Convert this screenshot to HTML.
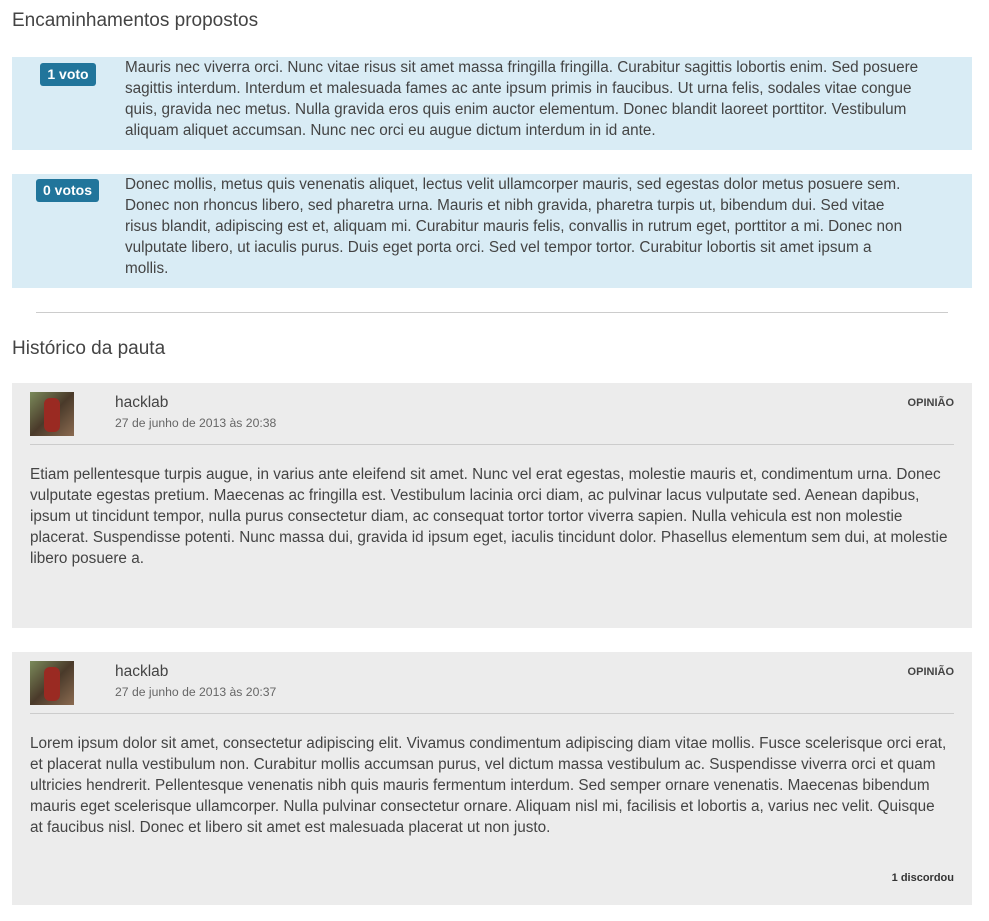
<!DOCTYPE html>
<html><head><meta charset="utf-8"><style>
body{margin:0;width:989px;height:921px;background:#fff;font-family:"Liberation Sans",sans-serif;color:#444;position:relative;overflow:hidden}
.a{position:absolute;white-space:nowrap}
h2{position:absolute;margin:0;font-weight:normal;font-size:19px;color:#444;left:12px}
.blue{position:absolute;left:12px;width:960px;background:#d9ecf5}
.badge{position:absolute;background:#21759b;color:#fff;font-weight:bold;font-size:14px;border-radius:3px;height:23px;line-height:23px;text-align:center}
.txt{position:absolute;font-size:15.3px;line-height:21px;color:#444;white-space:nowrap}
.grey{position:absolute;left:12px;width:960px;background:#ececec}
.av{position:absolute;left:18px;top:9px;width:44px;height:44px;background:linear-gradient(135deg,#7a8a5a,#4a3a2a 50%,#8a6a50)}
.av:after{content:"";position:absolute;left:14px;top:6px;width:16px;height:34px;background:#9a2a22;border-radius:6px}
.name{position:absolute;left:103px;top:11px;font-size:15.5px;color:#444}
.date{position:absolute;left:103px;top:33px;font-size:12.2px;color:#666}
.op{position:absolute;right:18px;top:14px;font-size:11px;font-weight:bold;color:#444}
.hr{position:absolute;left:18px;right:18px;top:61px;height:1px;background:#ccc}
</style></head><body>
<h2 style="top:10px">Encaminhamentos propostos</h2>
<div class="blue" style="top:57px;height:93px">
<div class="badge" style="left:28px;top:6px;width:56px">1 voto</div>
<div class="txt" style="left:113px;top:0px">Mauris nec viverra orci. Nunc vitae risus sit amet massa fringilla fringilla. Curabitur sagittis lobortis enim. Sed posuere<br>sagittis interdum. Interdum et malesuada fames ac ante ipsum primis in faucibus. Ut urna felis, sodales vitae congue<br>quis, gravida nec metus. Nulla gravida eros quis enim auctor elementum. Donec blandit laoreet porttitor. Vestibulum<br>aliquam aliquet accumsan. Nunc nec orci eu augue dictum interdum in id ante.</div>
</div>
<div class="blue" style="top:174px;height:114px">
<div class="badge" style="left:24px;top:5px;width:63px">0 votos</div>
<div class="txt" style="left:113px;top:0px">Donec mollis, metus quis venenatis aliquet, lectus velit ullamcorper mauris, sed egestas dolor metus posuere sem.<br>Donec non rhoncus libero, sed pharetra urna. Mauris et nibh gravida, pharetra turpis ut, bibendum dui. Sed vitae<br>risus blandit, adipiscing est et, aliquam mi. Curabitur mauris felis, convallis in rutrum eget, porttitor a mi. Donec non<br>vulputate libero, ut iaculis purus. Duis eget porta orci. Sed vel tempor tortor. Curabitur lobortis sit amet ipsum a<br>mollis.</div>
</div>
<div class="a" style="left:36px;top:312px;width:912px;height:1px;background:#ccc"></div>
<h2 style="top:338px">Histórico da pauta</h2>
<div class="grey" style="top:383px;height:245px">
<div class="av"></div><div class="name">hacklab</div><div class="date">27 de junho de 2013 às 20:38</div><div class="op">OPINIÃO</div><div class="hr"></div>
<div class="txt" style="left:18px;top:81px">Etiam pellentesque turpis augue, in varius ante eleifend sit amet. Nunc vel erat egestas, molestie mauris et, condimentum urna. Donec<br>vulputate egestas pretium. Maecenas ac fringilla est. Vestibulum lacinia orci diam, ac pulvinar lacus vulputate sed. Aenean dapibus,<br>ipsum ut tincidunt tempor, nulla purus consectetur diam, ac consequat tortor tortor viverra sapien. Nulla vehicula est non molestie<br>placerat. Suspendisse potenti. Nunc massa dui, gravida id ipsum eget, iaculis tincidunt dolor. Phasellus elementum sem dui, at molestie<br>libero posuere a.</div>
</div>
<div class="grey" style="top:652px;height:253px">
<div class="av"></div><div class="name">hacklab</div><div class="date">27 de junho de 2013 às 20:37</div><div class="op">OPINIÃO</div><div class="hr"></div>
<div class="txt" style="left:18px;top:81px">Lorem ipsum dolor sit amet, consectetur adipiscing elit. Vivamus condimentum adipiscing diam vitae mollis. Fusce scelerisque orci erat,<br>et placerat nulla vestibulum non. Curabitur mollis accumsan purus, vel dictum massa vestibulum ac. Suspendisse viverra orci et quam<br>ultricies hendrerit. Pellentesque venenatis nibh quis mauris fermentum interdum. Sed semper ornare venenatis. Maecenas bibendum<br>mauris eget scelerisque ullamcorper. Nulla pulvinar consectetur ornare. Aliquam nisl mi, facilisis et lobortis a, varius nec velit. Quisque<br>at faucibus nisl. Donec et libero sit amet est malesuada placerat ut non justo.</div>
<div class="a" style="right:18px;top:220px;font-size:11px;font-weight:bold;color:#333">1 discordou</div>
</div>
</body></html>
